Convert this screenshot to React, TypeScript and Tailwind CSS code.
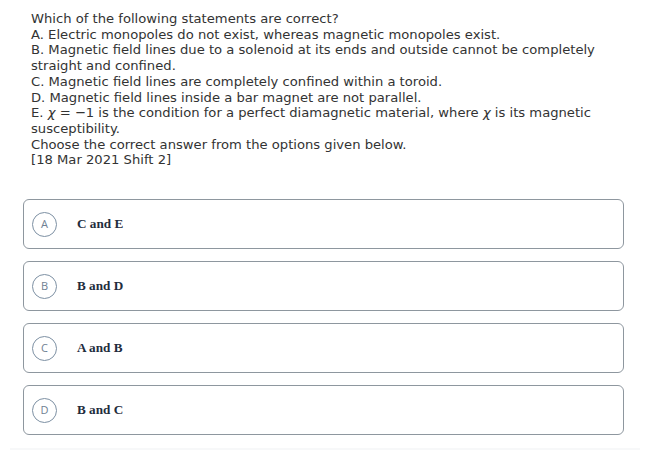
import React from "react";

const lines = [
  "Which of the following statements are correct?",
  "A. Electric monopoles do not exist, whereas magnetic monopoles exist.",
  "B. Magnetic field lines due to a solenoid at its ends and outside cannot be completely straight and confined.",
  "C. Magnetic field lines are completely confined within a toroid.",
  "D. Magnetic field lines inside a bar magnet are not parallel.",
];

const options = [
  { k: "A", t: "C and E" },
  { k: "B", t: "B and D" },
  { k: "C", t: "A and B" },
  { k: "D", t: "B and C" },
];

export default function App() {
  return (
    <div className="w-[650px] h-[450px] bg-white flex flex-col overflow-hidden">
      <div className="pl-[31px] pt-[11px] h-[199px] text-[13.15px] leading-[15.7px] text-[#333333] font-['DejaVu_Sans',sans-serif]">
        <div className="w-[592px]">
          {lines.map((l, i) => (
            <div key={i}>{l}</div>
          ))}
          <div>
            E. <span className="font-['DejaVu_Sans',sans-serif] italic leading-none">χ</span> = −1 is the condition for a perfect diamagnetic material, where{" "}
            <span className="font-['DejaVu_Sans',sans-serif] italic leading-none">χ</span> is its magnetic susceptibility.
          </div>
          <div>Choose the correct answer from the options given below.</div>
          <div>[18 Mar 2021 Shift 2]</div>
        </div>
      </div>
      <div className="ml-[23px] w-[601px] flex flex-col gap-[12px]">
        {options.map((o) => (
          <div
            key={o.k}
            className="h-[50px] border border-[#8e979f] rounded-[6px] flex items-center pl-[8px]"
          >
            <div className="w-[25px] h-[25px] rounded-full border border-[#7d90a3] flex items-center justify-center text-[11px] text-[#6f8193] font-['Open_Sans',sans-serif]">
              {o.k}
            </div>
            <div className="ml-[20px] text-[13.2px] font-semibold text-[#1f2d3d] font-['Liberation_Serif',serif]">
              {o.t}
            </div>
          </div>
        ))}
      </div>
      <div className="mt-[13px] mx-[10px] h-[2px] bg-[#f7f8f9]" />
    </div>
  );
}
